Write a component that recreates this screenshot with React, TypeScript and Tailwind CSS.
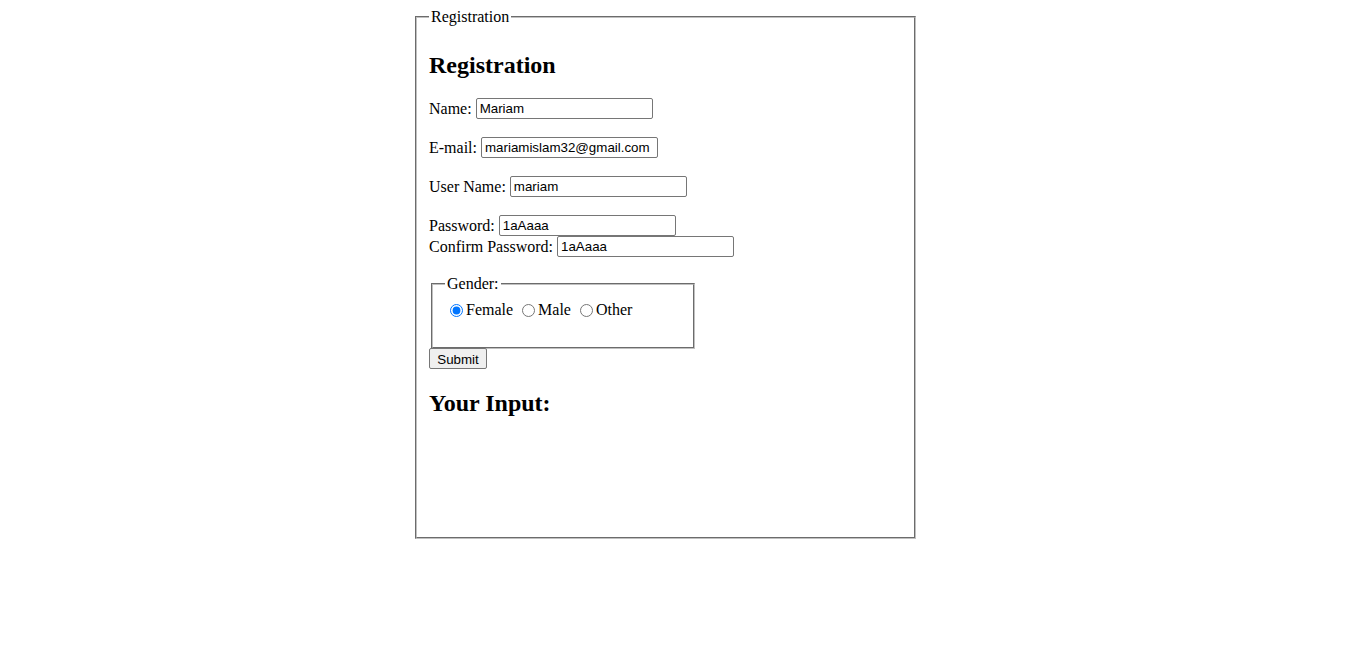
import { useState } from 'react'

const inputCls =
  "w-[177px] h-[21px] align-top border border-[#767676] rounded-[2px] bg-white px-[3px] py-[1px] text-[13.333px] leading-normal text-black font-['Liberation_Sans',Arial,sans-serif] outline-none"

export default function App() {
  const [form, setForm] = useState({
    name: 'Mariam',
    email: 'mariamislam32@gmail.com',
    username: 'mariam',
    password: '1aAaaa',
    confirm: '1aAaaa',
    gender: 'female',
  })

  const set = (key: string) => (e: React.ChangeEvent<HTMLInputElement>) =>
    setForm(prev => ({ ...prev, [key]: e.target.value }))

  return (
    <div className="min-h-screen bg-white pt-[8px] pl-[413px] text-black text-[16px] font-['Liberation_Serif','Times_New_Roman',serif]">
      <fieldset className="mx-[2px] w-[501px] h-[531px] border-2 [border-style:groove] border-[#c0c0c0] px-[12px] pt-[5.6px] pb-[10px]">
        <legend className="px-[2px] leading-[18px]">Registration</legend>

        <h2 className="mt-[19.92px] mb-[19px] text-[24px] font-bold leading-[27.6px]">Registration</h2>

        <form onSubmit={e => e.preventDefault()}>
          <p className="mb-[18px] leading-[21px]">
            Name: <input type="text" value={form.name} onChange={set('name')} className={inputCls} />
          </p>
          <p className="mb-[18px] leading-[21px]">
            E-mail: <input type="email" value={form.email} onChange={set('email')} className={inputCls} />
          </p>
          <p className="mb-[18px] leading-[21px]">
            User Name: <input type="text" value={form.username} onChange={set('username')} className={inputCls} />
          </p>
          <p className="mb-[18px] leading-[21px]">
            Password: <input type="text" value={form.password} onChange={set('password')} className={inputCls} />
            <br />
            Confirm Password: <input type="text" value={form.confirm} onChange={set('confirm')} className={inputCls} />
          </p>

          {/* Gender */}
          <fieldset className="mx-[2px] w-[264px] border-2 [border-style:groove] border-[#c0c0c0] px-[12px] pt-[5.6px] pb-[10px]">
            <legend className="px-[2px] leading-[18px]">Gender:</legend>
            <div className="leading-[21px]">
              <label>
                <input
                  type="radio"
                  name="gender"
                  checked={form.gender === 'female'}
                  onChange={() => setForm(p => ({ ...p, gender: 'female' }))}
                  className="ml-[5px] mr-[3px] mt-[3px] align-[-2px] w-[13px] h-[13px] accent-[#0075ff]"
                />
                Female
              </label>{' '}
              <label>
                <input
                  type="radio"
                  name="gender"
                  checked={form.gender === 'male'}
                  onChange={() => setForm(p => ({ ...p, gender: 'male' }))}
                  className="ml-[5px] mr-[3px] mt-[3px] align-[-2px] w-[13px] h-[13px]"
                />
                Male
              </label>{' '}
              <label>
                <input
                  type="radio"
                  name="gender"
                  checked={form.gender === 'other'}
                  onChange={() => setForm(p => ({ ...p, gender: 'other' }))}
                  className="ml-[5px] mr-[3px] mt-[3px] align-[-2px] w-[13px] h-[13px]"
                />
                Other
              </label>
            </div>
            <div className="h-[17px]" />
          </fieldset>

          <button
            type="submit"
            className="block -mt-px h-[21px] w-[58px] py-[1px] border border-[#767676] rounded-[2px] bg-[#efefef] text-[13.333px] leading-normal font-['Liberation_Sans',Arial,sans-serif] text-black"
          >
            Submit
          </button>
        </form>

        <h2 className="mt-[21px] mb-[19.92px] text-[24px] font-bold leading-[27.6px]">Your Input:</h2>
      </fieldset>
    </div>
  )
}
